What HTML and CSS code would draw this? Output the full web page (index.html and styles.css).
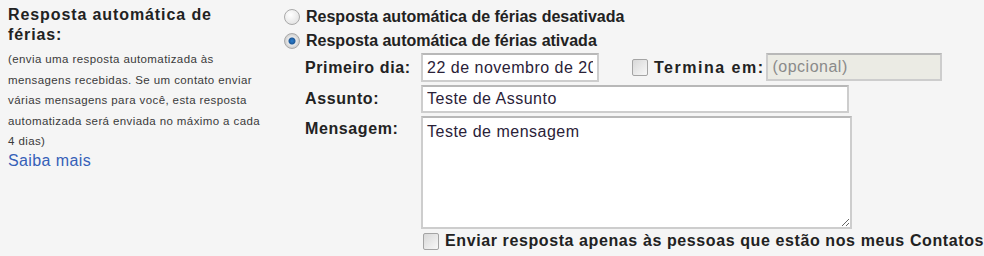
FILE: index.html
```html
<!DOCTYPE html>
<html lang="pt-BR">
<head>
    <meta charset="UTF-8">
    <title>Resposta automática de férias</title>
    <link rel="stylesheet" href="styles.css">
</head>
<body>
<div class="wrap">
    <div class="side">
        <div class="side_title">Resposta automática de férias:</div>
        <div class="side_note">(envia uma resposta automatizada às mensagens recebidas. Se um contato enviar várias mensagens para você, esta resposta automatizada será enviada no máximo a cada 4 dias)</div>
        <a href="javascript:;" class="side_link">Saiba mais</a>
    </div>
    <div class="main">
        <label class="radio_row">
            <input type="radio" name="vac" class="radio">
            <span>Resposta automática de férias desativada</span>
        </label>
        <label class="radio_row">
            <input type="radio" name="vac" class="radio" checked>
            <span>Resposta automática de férias ativada</span>
        </label>
        <div class="fields">
            <div class="lbl">Primeiro dia:</div>
            <div class="date_row">
                <input type="text" class="txt date" value="22 de novembro de 2011">
                <label class="end">
                    <input type="checkbox" class="check">
                    <span>Termina em:</span>
                </label>
                <input type="text" class="txt date off" placeholder="(opcional)" disabled>
            </div>
            <div class="lbl">Assunto:</div>
            <div><input type="text" class="txt subject" value="Teste de Assunto"></div>
            <div class="lbl top">Mensagem:</div>
            <div><textarea class="txt msg">Teste de mensagem</textarea></div>
            <div></div>
            <label class="only">
                <input type="checkbox" class="check">
                <span>Enviar resposta apenas às pessoas que estão nos meus Contatos</span>
            </label>
        </div>
    </div>
</div>
</body>
</html>
```

FILE: styles.css
```css
* {
    margin: 0;
    padding: 0;
    box-sizing: border-box;
}

body {
    background: #f5f5f5;
    font-family: "Liberation Sans", Arial, sans-serif;
    color: #222;
    overflow: hidden;
}

.wrap {
    display: flex;
    padding: 5px 0 0 8px;
}

.side {
    width: 276px;
    flex-shrink: 0;
}

.side_title {
    width: 240px;
    font-size: 16px;
    font-weight: bold;
    letter-spacing: 0.9px;
    line-height: 20px;
}

.side_note {
    width: 255px;
    margin-top: 4px;
    font-size: 11.5px;
    letter-spacing: 0.4px;
    line-height: 20.5px;
    color: #3a3a3a;
}

.side_link {
    display: block;
    margin-top: 0;
    font-size: 16px;
    letter-spacing: 0.4px;
    color: #3560b8;
    text-decoration: none;
}

.main {
    flex: 1;
}

.radio_row {
    display: flex;
    align-items: center;
    gap: 6px;
    height: 24px;
    font-size: 16px;
    font-weight: bold;
}

.radio {
    appearance: none;
    width: 16px;
    height: 16px;
    border-radius: 50%;
    border: 1px solid #a9a9a9;
    background: radial-gradient(circle at 40% 35%, #fff, #dcdcdc);
}

.radio:checked {
    background: radial-gradient(circle, #2a7fd0 0, #1e5a9a 3px, #eaeaea 4px, #cfcfcf 7px);
}

.fields {
    display: grid;
    grid-template-columns: 116px auto;
    row-gap: 3px;
    margin: 0 0 0 21px;
}

.lbl {
    display: flex;
    align-items: center;
    font-size: 16px;
    font-weight: bold;
    letter-spacing: 0.6px;
}

.lbl.top {
    align-items: flex-start;
    padding-top: 4px;
}

.date_row {
    display: flex;
    align-items: center;
}

.txt {
    height: 29px;
    padding: 0 4px;
    border: 2px solid #cdcdcd;
    border-top-color: #b8b8b8;
    background: #fff;
    font-family: "Liberation Sans", Arial, sans-serif;
    font-size: 16px;
    letter-spacing: 0.5px;
    color: #2a2238;
    outline: none;
}

.date {
    width: 178px;
}

.off {
    width: 176px;
    background: #ebebe4;
    height: 28px;
    margin-top: -2px;
}

.off::placeholder {
    color: #8a8a8a;
}

.end {
    display: flex;
    align-items: center;
    gap: 6px;
    margin: 0 2px 0 33px;
    font-size: 16px;
    font-weight: bold;
    letter-spacing: 1.5px;
}

.check {
    appearance: none;
    width: 16px;
    height: 17px;
    border: 1px solid #a4a4a4;
    border-radius: 2px;
    background: linear-gradient(135deg, #d8d8d8, #f8f8f8);
}

.subject {
    width: 428px;
    height: 28px;
}

.msg {
    display: block;
    width: 431px;
    height: 113px;
    padding: 5px 4px;
    resize: both;
}

.only {
    display: flex;
    align-items: center;
    gap: 6px;
    margin-left: 2px;
    height: 20px;
    margin-top: -1px;
    font-size: 16px;
    font-weight: bold;
    letter-spacing: 0.6px;
    white-space: nowrap;
}
```
